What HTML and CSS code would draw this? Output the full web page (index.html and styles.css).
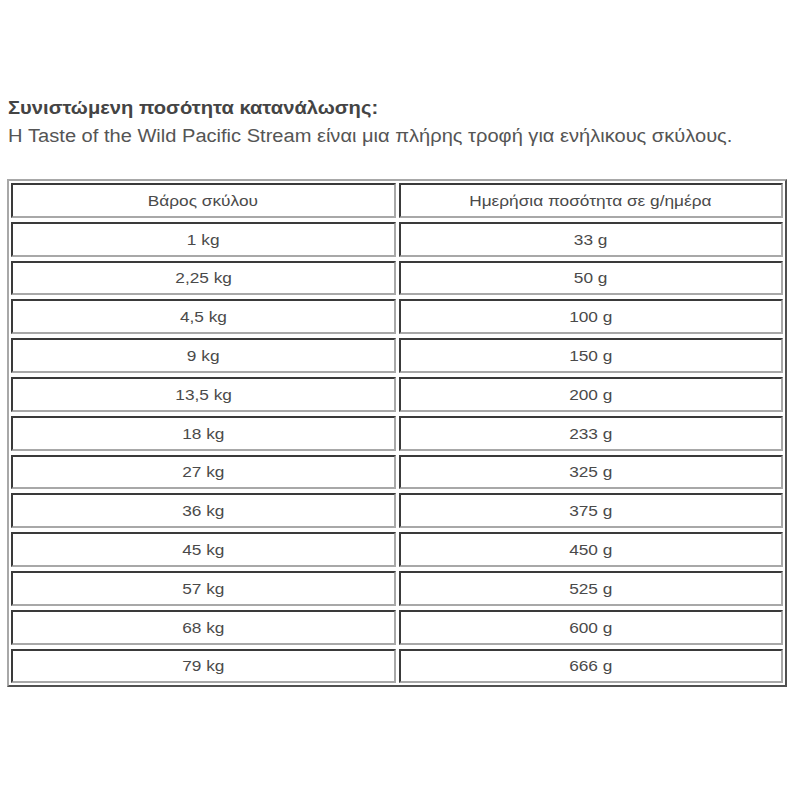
FILE: index.html
```html
<!DOCTYPE html>
<html lang="el">
<head>
<meta charset="utf-8">
<title>Ποσότητα κατανάλωσης</title>
<link rel="stylesheet" href="styles.css">
</head>
<body>
<div class="page">
  <div class="intro">
    <p class="title"><span class="wide">Συνιστώμενη ποσότητα κατανάλωσης:</span></p>
    <p class="desc"><span class="wide">Η Taste of the Wild Pacific Stream είναι μια πλήρης τροφή για ενήλικους σκύλους.</span></p>
  </div>
  <div class="table">
    <div class="cell"><span>Βάρος σκύλου</span></div><div class="cell"><span>Ημερήσια ποσότητα σε g/ημέρα</span></div>
    <div class="cell"><span>1 kg</span></div><div class="cell"><span>33 g</span></div>
    <div class="cell"><span>2,25 kg</span></div><div class="cell"><span>50 g</span></div>
    <div class="cell"><span>4,5 kg</span></div><div class="cell"><span>100 g</span></div>
    <div class="cell"><span>9 kg</span></div><div class="cell"><span>150 g</span></div>
    <div class="cell"><span>13,5 kg</span></div><div class="cell"><span>200 g</span></div>
    <div class="cell"><span>18 kg</span></div><div class="cell"><span>233 g</span></div>
    <div class="cell"><span>27 kg</span></div><div class="cell"><span>325 g</span></div>
    <div class="cell"><span>36 kg</span></div><div class="cell"><span>375 g</span></div>
    <div class="cell"><span>45 kg</span></div><div class="cell"><span>450 g</span></div>
    <div class="cell"><span>57 kg</span></div><div class="cell"><span>525 g</span></div>
    <div class="cell"><span>68 kg</span></div><div class="cell"><span>600 g</span></div>
    <div class="cell"><span>79 kg</span></div><div class="cell"><span>666 g</span></div>
  </div>
</div>
</body>
</html>
```

FILE: styles.css
```css
html, body {
  margin: 0;
  padding: 0;
  background: #ffffff;
}
body {
  font-family: "Liberation Sans", Arial, sans-serif;
}
.page {
  padding: 94px 13px 0 7px;
}
.intro {
  padding-left: 1px;
}
.title {
  margin: 0;
  font-size: 18px;
  line-height: 28px;
  font-weight: bold;
  color: #444444;
  white-space: nowrap;
}
.desc {
  margin: 0;
  font-size: 18px;
  line-height: 28px;
  color: #555555;
  white-space: nowrap;
}
.wide {
  display: inline-block;
  transform: scaleX(1.12);
  transform-origin: left center;
}
.desc .wide {
  transform: scaleX(1.115);
}
.table {
  margin-top: 29px;
  display: grid;
  grid-template-columns: 1fr 1fr;
  grid-auto-rows: 34.8px;
  column-gap: 3px;
  row-gap: 4px;
  padding: 2px;
  border: 2px solid;
  border-color: #a8a8a8 #505050 #505050 #a8a8a8;
}
.cell {
  box-sizing: border-box;
  border: 2px solid;
  border-color: #3a3a3a #a8a8a8 #a8a8a8 #3a3a3a;
  display: flex;
  align-items: center;
  justify-content: center;
  font-size: 15px;
  color: #4a4a4a;
}
.cell span {
  display: inline-block;
  transform: scaleX(1.15);
  transform-origin: center center;
}
```
